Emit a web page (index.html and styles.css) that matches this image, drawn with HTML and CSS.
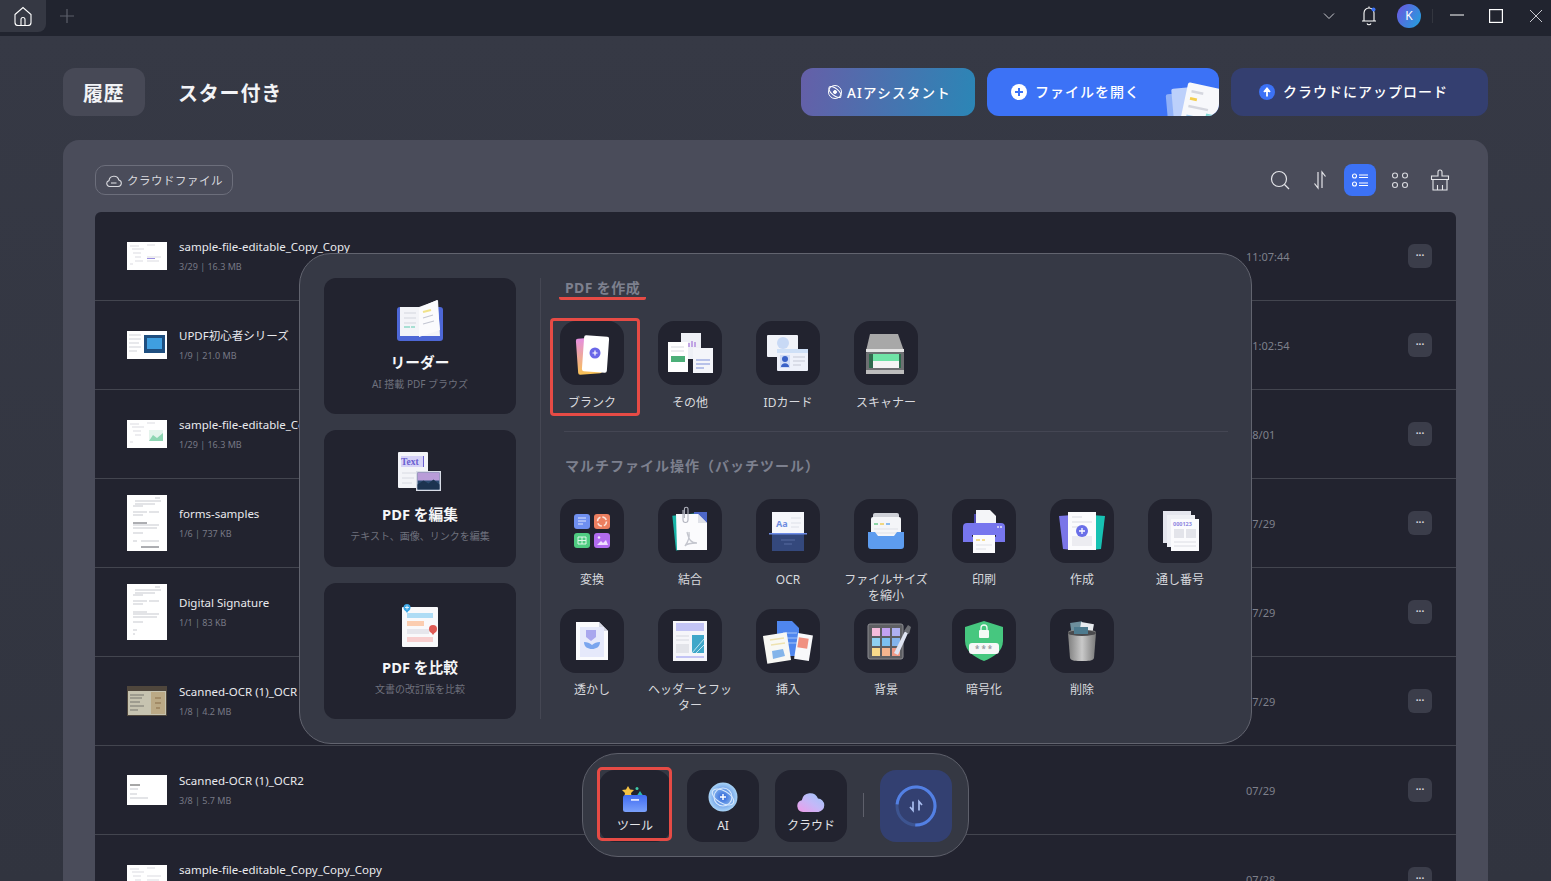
FILE: index.html
```html
<!DOCTYPE html>
<html lang="ja">
<head>
<meta charset="utf-8">
<title>UPDF</title>
<link rel="stylesheet" href="styles.css">
</head>
<body>
<div class="app">
  <header class="titlebar">
    <div class="home-tab">
      <svg width="20" height="20" viewBox="0 0 20 20" fill="none" stroke="#fff" stroke-width="1.1"><path d="M2 8.5 10 1.5l8 7v8a3 3 0 0 1-3 3H5a3 3 0 0 1-3-3z"/><path d="M8 19.500v-6a2 2 0 0 1 4 0v6"/></svg>
    </div>
    <svg class="add-tab" width="14" height="14" viewBox="0 0 14 14" stroke="#5c5f6b" stroke-width="1.2"><path d="M7 0v14M0 7h14"/></svg>
    <div class="win-controls">
      <svg class="wc-chevron" width="12" height="8" viewBox="0 0 12 8" fill="none" stroke="#c9cad0" stroke-width="1"><path d="M1 1.500 6 6.500l5-5"/></svg>
      <svg class="wc-bell" width="16" height="20" viewBox="0 0 16 20" fill="none" stroke="#fff" stroke-width="1.1"><path d="M3 14.500V7a5 5 0 0 1 10 0v7.500M1 15h14M6 17.500a2.200 2.200 0 0 0 4 0M8 .5v1.500"/><circle cx="12.500" cy="3.500" r="2" fill="#3c72f6" stroke="none"/></svg>
      <span class="avatar">K</span>
      <span class="wc-sep"></span>
      <svg class="wc-min" width="14" height="2" viewBox="0 0 14 2" stroke="#fff" stroke-width="1"><path d="M0 1h14"/></svg>
      <svg class="wc-max" width="14" height="14" viewBox="0 0 14 14" fill="none" stroke="#fff" stroke-width="1.2"><rect x=".6" y=".6" width="12.800" height="12.800"/></svg>
      <svg class="wc-close" width="14" height="14" viewBox="0 0 14 14" stroke="#c9cad0" stroke-width="1"><path d="M1 1l12 12M13 1 1 13"/></svg>
    </div>
  </header>

  <main class="main">
    <div class="top-row">
      <div class="tab tab-active">履歴</div>
      <div class="tab tab-star">スター付き</div>
      <div class="actions">
        <button class="action action-ai">
          <svg width="16" height="16" viewBox="0 0 16 16" fill="none" stroke="#fff" stroke-width="1"><circle cx="8" cy="8" r="6.500"/><ellipse cx="8" cy="8" rx="7.500" ry="3.500" transform="rotate(40 8 8)"/><circle cx="8" cy="8" r="1.500" fill="#fff"/></svg>
          <span>AIアシスタント</span>
        </button>
        <button class="action action-open">
          <svg width="16" height="16" viewBox="0 0 16 16"><circle cx="8" cy="8" r="8" fill="#fff"/><path d="M8 4v8M4 8h8" stroke="#3c72f6" stroke-width="2"/></svg>
          <span>ファイルを開く</span>
          <svg class="open-art" width="56" height="48" viewBox="0 0 56 48"><g transform="translate(0 11)"><rect x="4" y="14" width="30" height="40" rx="2" fill="#8fb0f8" transform="rotate(-5 20 30)"/><rect x="10" y="8" width="34" height="44" rx="2" fill="#bcd0fb" transform="rotate(-5 30 30)"/><g transform="rotate(12 36 30)"><rect x="20" y="6" width="44" height="46" rx="2" fill="#f7f8fb"/><rect x="25" y="13" width="12" height="2.500" fill="#d5d7df"/><rect x="25" y="20" width="7" height="3" fill="#f4cf4f"/><rect x="25" y="28" width="20" height="2.500" fill="#d5d7df"/><rect x="44" y="33" width="8" height="3" fill="#7fd8d4"/><rect x="25" y="38" width="8" height="3" fill="#9fcdf0"/></g></g></svg>
        </button>
        <button class="action action-cloud">
          <svg width="16" height="16" viewBox="0 0 16 16"><circle cx="8" cy="8" r="8" fill="#3c72f6"/><path d="M8 12.500V6.500M5 8l3-3.500L11 8" stroke="#fff" stroke-width="1.800" fill="#fff"/></svg>
          <span>クラウドにアップロード</span>
        </button>
      </div>
    </div>

    <section class="panel">
      <div class="toolbar">
        <div class="cloud-pill">
          <svg width="16" height="15" viewBox="0 0 16 15" fill="none" stroke="#d8d9de" stroke-width="1.100"><path d="M3.600 13.500a3 3 0 0 1-.6-5.900 5 5 0 0 1 9.800-.6 3.300 3.300 0 0 1-.6 6.500z"/><path d="M5 10h5.500"/></svg>
          <span>クラウドファイル</span>
        </div>
        <div class="tools">
          <svg class="tool-icon" width="20" height="20" viewBox="0 0 20 20" fill="none" stroke="#e4e5e9" stroke-width="1.200"><circle cx="9" cy="9" r="7.500"/><path d="M14.500 14.500 19 19"/></svg>
          <svg class="tool-icon" width="20" height="20" viewBox="0 0 20 20" fill="none" stroke="#e4e5e9" stroke-width="1.200"><path d="M8 2v16L4.500 13.500M12 18V2l3.500 4.500"/></svg>
          <span class="tool-active">
            <svg width="16" height="14" viewBox="0 0 16 14" fill="none" stroke="#fff" stroke-width="1.100"><circle cx="2.500" cy="3" r="2"/><circle cx="2.500" cy="11" r="2"/><path d="M7 2h9M7 4.500h9M7 10h9M7 12.500h9"/></svg>
          </span>
          <svg class="tool-icon" width="20" height="20" viewBox="0 0 20 20" fill="none" stroke="#d8d9de" stroke-width="1.100"><circle cx="5" cy="5.500" r="2.500"/><circle cx="15" cy="5.500" r="2.500"/><circle cx="5" cy="15" r="2.500"/><circle cx="15" cy="15" r="2.500"/></svg>
          <svg class="tool-icon" width="20" height="22" viewBox="0 0 20 22" fill="none" stroke="#e4e5e9" stroke-width="1.100"><path d="M8 7V3a2 2 0 0 1 4 0v4h6.500v3.500h-17V7zM3 10.500V21h14V10.500M7.500 21v-5M12.500 21v-5"/></svg>
        </div>
      </div>

      <div class="list">
        <div class="row">
          <svg class="thumb" width="40" height="28" viewBox="0 0 40 28"><rect width="40" height="28" fill="#fff"/><path d="M3 4h9M20 3h8M5 7h12M6 11h8M8 15h6M8 19h8M20 15h14M20 19h12M3 22h3" stroke="#a3a5b0" stroke-width=".4"/><rect x="20" y="16" width="8" height="1" fill="#9a8fe0"/></svg>
          <div class="info"><div class="name">sample-file-editable_Copy_Copy</div><div class="meta">3/29 | 16.3 MB</div></div>
          <div class="time">11:07:44</div><span class="more">···</span>
        </div>
        <div class="row">
          <svg class="thumb" width="40" height="28" viewBox="0 0 40 28"><rect width="40" height="28" fill="#fff"/><path d="M2 4h12M2 8h12M2 12h10M2 16h12M2 20h8" stroke="#a3a5b0" stroke-width=".5"/><rect x="17" y="4" width="21" height="18" fill="#1f4f80"/><rect x="20" y="7" width="15" height="11" fill="#3f9fe0"/></svg>
          <div class="info"><div class="name">UPDF初心者シリーズ</div><div class="meta">1/9 | 21.0 MB</div></div>
          <div class="time">11:02:54</div><span class="more">···</span>
        </div>
        <div class="row">
          <svg class="thumb" width="40" height="28" viewBox="0 0 40 28"><rect width="40" height="28" fill="#fff"/><path d="M3 4h9M20 3h8M5 7h12M6 11h8M8 15h6M3 22h3" stroke="#a3a5b0" stroke-width=".4"/><rect x="22" y="10" width="14" height="11" fill="#e4f4ec"/><path d="M22 21l4-6 4 3 6-5v8z" fill="#8ed6b3"/></svg>
          <div class="info"><div class="name">sample-file-editable_Copy</div><div class="meta">1/29 | 16.3 MB</div></div>
          <div class="time">08/01</div><span class="more">···</span>
        </div>
        <div class="row">
          <svg class="thumb" width="40" height="56" viewBox="0 0 40 56"><rect width="40" height="56" fill="#fff"/><path d="M28 3h5M8 6h26M8 9h20M6 11h10M6 17h14M22 17h10M6 20h10M6 30h26M6 33h24M6 38h10M6 46h4M14 46h18" stroke="#8f919c" stroke-width=".5"/><path d="M6 28h14M14 52h18" stroke="#30323c" stroke-width=".8"/></svg>
          <div class="info"><div class="name">forms-samples</div><div class="meta">1/6 | 737 KB</div></div>
          <div class="time">07/29</div><span class="more">···</span>
        </div>
        <div class="row">
          <svg class="thumb" width="40" height="56" viewBox="0 0 40 56"><rect width="40" height="56" fill="#fff"/><path d="M28 3h5M8 6h26M8 9h20M6 11h10M6 17h14M22 17h10M6 20h10M6 28h14M6 30h26M6 33h24M6 38h10M6 46h4M6 50h2" stroke="#8f919c" stroke-width=".5"/></svg>
          <div class="info"><div class="name">Digital Signature</div><div class="meta">1/1 | 83 KB</div></div>
          <div class="time">07/29</div><span class="more">···</span>
        </div>
        <div class="row">
          <svg class="thumb" width="40" height="30" viewBox="0 0 40 30"><rect width="40" height="30" fill="#4f463c"/><rect x="1" y="5" width="38" height="24" fill="#c6c3b0"/><rect x="24" y="6" width="14" height="22" fill="#bba985"/><path d="M3 9h14M3 12h12M3 16h10M3 20h14M3 24h8" stroke="#555" stroke-width=".7"/><path d="M28 12h6M28 17h6M29 22h4" stroke="#8a6f4a" stroke-width="1.200"/></svg>
          <div class="info"><div class="name">Scanned-OCR (1)_OCR</div><div class="meta">1/8 | 4.2 MB</div></div>
          <div class="time">07/29</div><span class="more">···</span>
        </div>
        <div class="row">
          <svg class="thumb" width="40" height="30" viewBox="0 0 40 30"><rect width="40" height="30" fill="#fff"/><path d="M3 10h10" stroke="#222" stroke-width=".8"/><path d="M3 14h8M3 19h7M3 23h18" stroke="#8f919c" stroke-width=".5"/></svg>
          <div class="info"><div class="name">Scanned-OCR (1)_OCR2</div><div class="meta">3/8 | 5.7 MB</div></div>
          <div class="time">07/29</div><span class="more">···</span>
        </div>
        <div class="row">
          <svg class="thumb" width="40" height="28" viewBox="0 0 40 28"><rect width="40" height="28" fill="#fff"/><path d="M3 4h9M20 3h8M5 7h12M6 11h8M8 15h6M20 11h14M20 15h12" stroke="#a3a5b0" stroke-width=".4"/></svg>
          <div class="info"><div class="name">sample-file-editable_Copy_Copy_Copy</div><div class="meta">3/29 | 16.3 MB</div></div>
          <div class="time">07/28</div><span class="more">···</span>
        </div>
      </div>
    </section>
  </main>

  <div class="popup">
    <div class="cards">
      <div class="card">
        <svg width="48" height="44" viewBox="0 0 48 44"><rect x="1" y="8" width="46" height="34" rx="3" fill="#4d67d6"/><path d="M4 8h19L42 1l2 36H4z" fill="#f3f4f8"/><path d="M23 9 41 1l3 30-21 7z" fill="#fbfbfd"/><path d="M8 14h12M8 19h12M8 24h12" stroke="#d3d5de" stroke-width="1.200"/><path d="M8 28h6M15 28h4" stroke="#8fd8c6" stroke-width="1.500"/><path d="M27 13l8-2" stroke="#f0e28a" stroke-width="2"/><path d="M27 19l10-3M27 25l11-3" stroke="#c3c6d2" stroke-width="1.200"/></svg>
        <div class="card-title">リーダー</div>
        <div class="card-sub">AI 搭載 PDF ブラウズ</div>
      </div>
      <div class="card">
        <svg width="46" height="44" viewBox="0 0 46 44"><rect x="1" y="1" width="30" height="36" rx="1" fill="#f3f4f8"/><rect x="4" y="5" width="22" height="11" fill="#d6d2f7"/><text x="4" y="14" class="svg-text" font-size="9.500" fill="#6a5fd0">Text</text><path d="M26.500 5v11" stroke="#6a5fd0"/><path d="M5 22h14M5 27h12M5 32h10" stroke="#d8dae2"/><rect x="19" y="20" width="25" height="20" fill="#d8dce6"/><rect x="20.500" y="21.500" width="22" height="17" fill="#2b4a70"/><path d="M20.500 21.500h22v8h-22z" fill="#b99cd8"/><path d="M20.500 38.500v-5l6-4 5 3 5-4 6 5v5z" fill="#1c3350"/></svg>
        <div class="card-title">PDF を編集</div>
        <div class="card-sub">テキスト、画像、リンクを編集</div>
      </div>
      <div class="card">
        <svg width="40" height="44" viewBox="0 0 40 44"><rect x="2" y="3" width="36" height="40" rx="1" fill="#f9f9fb"/><rect x="7" y="9" width="26" height="5" fill="#aedcf5"/><rect x="7" y="17" width="17" height="5" fill="#fbcdb0"/><rect x="7" y="25" width="22" height="5" fill="#e6e6ec"/><rect x="7" y="33" width="26" height="5" fill="#f8cfcf"/><circle cx="7" cy="3.500" r="3.500" fill="#3ba6e6"/><path d="M4.500 5.500 7 9l2.500-3.500" fill="#3ba6e6"/><path d="M5 3.500h4M7 1.500v4" stroke="#fff" stroke-width=".8"/><circle cx="33" cy="25" r="4" fill="#df5a55"/><path d="M30 27l3 4 3-4" fill="#df5a55"/></svg>
        <div class="card-title">PDF を比較</div>
        <div class="card-sub">文書の改訂版を比較</div>
      </div>
    </div>

    <div class="tools-area">
      <h3 class="heading heading-first">PDF を作成</h3>
      <div class="grid grid-create">
        <div class="item marked">
          <div class="tile"><svg width="64" height="64" viewBox="0 0 64 64"><defs><linearGradient id="gb" x1="0" y1="0" x2="0" y2="1"><stop offset="0" stop-color="#e58fe0"/><stop offset="1" stop-color="#f9c254"/></linearGradient></defs><rect x="17" y="17" width="24" height="36" rx="2" fill="url(#gb)" transform="rotate(-4 29 35)"/><rect x="23" y="15" width="25" height="36" rx="2" fill="#fff" transform="rotate(4 35 33)"/><circle cx="35" cy="32" r="5.500" fill="#6a67e8"/><path d="M35 29.500v5M32.500 32h5" stroke="#fff" stroke-width="1.200"/></svg></div>
          <div class="label">ブランク</div>
        </div>
        <div class="item">
          <div class="tile"><svg width="64" height="64" viewBox="0 0 64 64"><rect x="23" y="12" width="20" height="26" fill="#eef0f6"/><path d="M31 22v4M34 20v6M37 21v5" stroke="#b28ce0" stroke-width="1.500"/><rect x="10" y="21" width="20" height="30" fill="#fff"/><path d="M13 26h13M13 30h13" stroke="#d8d9e0"/><rect x="13" y="35" width="14" height="6" fill="#4caf78"/><rect x="35" y="27" width="20" height="25" fill="#f4f5fa"/><path d="M38 39h14M38 43h14M38 47h8" stroke="#7d8fd8"/></svg></div>
          <div class="label">その他</div>
        </div>
        <div class="item">
          <div class="tile"><svg width="64" height="64" viewBox="0 0 64 64"><rect x="11" y="14" width="31" height="22" rx="1" fill="#f1f3f9"/><circle cx="27" cy="22" r="6" fill="#c8d9f5"/><rect x="21" y="28" width="31" height="22" rx="1" fill="#eef1fa"/><rect x="21" y="28" width="31" height="4" fill="#cfe0f7"/><rect x="24" y="34" width="10" height="13" fill="#d0dcf6"/><circle cx="29" cy="38" r="3" fill="#3a62c8"/><path d="M25 46c0-5 8-5 8 0z" fill="#3a62c8"/><path d="M37 36h12M37 40h12M37 44h8" stroke="#c6c9d6"/></svg></div>
          <div class="label">IDカード</div>
        </div>
        <div class="item">
          <div class="tile"><svg width="64" height="64" viewBox="0 0 64 64"><path d="M16 13h28l6 17H12z" fill="#a8a8a8"/><rect x="12" y="28" width="38" height="3" fill="#e4e4e4"/><rect x="12" y="31" width="38" height="22" rx="1" fill="#6d6f72"/><rect x="15" y="33" width="32" height="14" fill="#2f6a4d"/><rect x="19" y="33" width="26" height="7" fill="#6fe3a6"/><rect x="19" y="40" width="26" height="7" fill="#f5f5f5"/><rect x="12" y="49" width="38" height="4" fill="#bdbdbd"/></svg></div>
          <div class="label">スキャナー</div>
        </div>
      </div>

      <div class="divider"></div>

      <h3 class="heading heading-second">マルチファイル操作（バッチツール）</h3>
      <div class="grid grid-batch">
        <div class="item">
          <div class="tile"><svg width="64" height="64" viewBox="0 0 64 64"><rect x="14" y="15" width="16" height="15" rx="3" fill="#6f8ff0"/><path d="M18 19h8M18 22h8M18 25h5" stroke="#dfe6fb" stroke-width="1.200"/><rect x="34" y="15" width="16" height="15" rx="3" fill="#ec7f60"/><circle cx="42" cy="22.500" r="4.500" fill="none" stroke="#fbe3da" stroke-width="1.500" stroke-dasharray="5 2"/><rect x="14" y="34" width="16" height="15" rx="3" fill="#4fcb81"/><path d="M18 38h8v7h-8zM22 38v7M18 41.500h8" fill="none" stroke="#dcf6e7"/><rect x="34" y="34" width="16" height="15" rx="3" fill="#b26cf0"/><path d="M37 46l4-4 2 2 3-3 2 5z" fill="#efe0fc"/><circle cx="39" cy="38.500" r="1.300" fill="#efe0fc"/></svg></div>
          <div class="label">変換</div>
        </div>
        <div class="item">
          <div class="tile"><svg width="64" height="64" viewBox="0 0 64 64"><rect x="16" y="15" width="31" height="35" fill="#17b3a6" transform="rotate(-6 32 32)"/><rect x="36" y="13" width="13" height="18" fill="#4d67c8"/><path d="M18 15h22l9 9v27H19z" fill="#fbfbfd"/><path d="M40 15l9 9h-9z" fill="#dfe1e8"/><path d="M29 33c2 8 4 11 10 11-5 0-10 0-12 3 3-4 5-8 4-14" fill="none" stroke="#c4c6ce" stroke-width="1.300"/><path d="M25 11v10a2.500 2.500 0 0 0 5 0V10a1.800 1.800 0 0 0-3.600 0v9" fill="none" stroke="#b3b5bf" stroke-width="1.100"/></svg></div>
          <div class="label">結合</div>
        </div>
        <div class="item">
          <div class="tile"><svg width="64" height="64" viewBox="0 0 64 64"><rect x="16" y="13" width="32" height="21" fill="#f6f7fb"/><text x="20" y="28" class="svg-text-sans" font-size="9" fill="#6e8ee0">Aa</text><path d="M35 19h10M35 24h10M35 28h8" stroke="#dde0e8"/><rect x="16" y="35" width="32" height="17" fill="#34487c"/><path d="M25 41h14M28 45h8" stroke="#566aa0"/><rect x="13" y="34" width="38" height="1.500" fill="#6d8ce8"/></svg></div>
          <div class="label">OCR</div>
        </div>
        <div class="item">
          <div class="tile"><svg width="64" height="64" viewBox="0 0 64 64"><rect x="19" y="14" width="26" height="14" rx="2" fill="#cfd1d8"/><rect x="17" y="18" width="30" height="26" rx="2" fill="#f4f5f8"/><path d="M20 25h4" stroke="#69c98c" stroke-width="1.500"/><path d="M26 25h4" stroke="#f0cc58" stroke-width="1.500"/><path d="M32 25h4" stroke="#69a8ec" stroke-width="1.500"/><path d="M20 30h24M20 34h24" stroke="#dfe1e7"/><path d="M14 33h7l3 4h16l3-4h7v14a3 3 0 0 1-3 3H17a3 3 0 0 1-3-3z" fill="#5d9cef"/></svg></div>
          <div class="label">ファイルサイズを縮小</div>
        </div>
        <div class="item">
          <div class="tile"><svg width="64" height="64" viewBox="0 0 64 64"><rect x="22" y="15" width="20" height="10" fill="#4b48b0"/><path d="M24 11h14l6 6v13H24z" fill="#f4f5f8"/><path d="M11 28a4 4 0 0 1 4-4h34a4 4 0 0 1 4 4v15H11z" fill="#7776ee"/><circle cx="46" cy="28" r="1" fill="#e7e7fb"/><circle cx="49" cy="28" r="1" fill="#e7e7fb"/><rect x="20" y="36" width="24" height="1.800" fill="#20202e"/><rect x="21" y="36" width="22" height="18" fill="#fbfbfd"/><path d="M24 41h4" stroke="#f0cc58" stroke-width="1.300"/><path d="M30 41h3" stroke="#f0cc58" stroke-width="1.300"/><path d="M24 46h16M24 50h10" stroke="#dfe1e7"/></svg></div>
          <div class="label">印刷</div>
        </div>
        <div class="item">
          <div class="tile"><svg width="64" height="64" viewBox="0 0 64 64"><path d="M9 17l14-1v35l-10-1z" fill="#7a75e8"/><path d="M55 17l-14-1v35l10-1z" fill="#17c2b3"/><rect x="18" y="13" width="28" height="38" fill="#fbfbfd"/><path d="M22 18h10M22 23h20M22 28h10" stroke="#d9dbe3"/><rect x="22" y="37" width="20" height="10" fill="#ececf1"/><circle cx="32" cy="32" r="6" fill="#6a6fe8"/><path d="M32 29v6M29 32h6" stroke="#fff" stroke-width="1.300"/></svg></div>
          <div class="label">作成</div>
        </div>
        <div class="item">
          <div class="tile"><svg width="64" height="64" viewBox="0 0 64 64"><rect x="15" y="12" width="28" height="32" fill="#e5e6ee"/><rect x="19" y="16" width="28" height="32" fill="#eff0f5"/><rect x="23" y="20" width="28" height="32" fill="#fbfbfd"/><text x="25" y="27" class="svg-text-sans" font-size="5.500" fill="#8d86e0">000123</text><rect x="26" y="30" width="10" height="9" fill="#e3e4ea"/><rect x="38" y="30" width="10" height="9" fill="#e3e4ea"/><path d="M26 43h22M26 47h22" stroke="#dcdde4"/></svg></div>
          <div class="label">通し番号</div>
        </div>
        <div class="item">
          <div class="tile"><svg width="64" height="64" viewBox="0 0 64 64"><path d="M16 13h23l9 9v29H16z" fill="#fbfbfd"/><path d="M39 13l9 9h-9z" fill="#d6d8e4"/><rect x="20" y="18" width="24" height="30" fill="#e6e9fb"/><path d="M26 21h10v7l-5 4-5-4z" fill="#a9a7ee"/><path d="M24 33c0 5 4 7 8 7s8-2 8-7c-3 0-6 1-8 3-2-2-5-3-8-3z" fill="#7aa5ee"/></svg></div>
          <div class="label">透かし</div>
        </div>
        <div class="item">
          <div class="tile"><svg width="64" height="64" viewBox="0 0 64 64"><rect x="15" y="12" width="34" height="40" fill="#f6f6fa"/><rect x="18" y="14" width="28" height="8" fill="#c3c4f5"/><path d="M18 27h13M18 31h13" stroke="#d6d8e0"/><rect x="18" y="35" width="13" height="9" fill="#e3e4ea"/><rect x="34" y="26" width="12" height="18" fill="#3fa7c9"/><path d="M34 44l12-14M38 44l8-8" stroke="#bfe4f0" stroke-width="1"/><rect x="18" y="47" width="28" height="2" fill="#c3c4f5"/></svg></div>
          <div class="label">ヘッダーとフッター</div>
        </div>
        <div class="item">
          <div class="tile"><svg width="64" height="64" viewBox="0 0 64 64"><path d="M21 12h15l7 7v28H21z" fill="#4f86ee"/><path d="M27 24h14M27 29h14M27 34h14" stroke="#a9c6f8"/><rect x="40" y="25" width="15" height="26" fill="#f8f8fa" transform="rotate(9 47 38)"/><rect x="42" y="29" width="10" height="10" fill="#f09080" transform="rotate(9 47 34)"/><rect x="9" y="25" width="24" height="28" fill="#f8f8f4" transform="rotate(-9 21 39)"/><path d="M14 31l14-2M15 36l14-2" stroke="#eee2b0" stroke-width="1.500"/><path d="M17 50l-1-8 11-2 2 7z" fill="#84b5ea"/></svg></div>
          <div class="label">挿入</div>
        </div>
        <div class="item">
          <div class="tile"><svg width="64" height="64" viewBox="0 0 64 64"><rect x="14" y="15" width="35" height="35" rx="2" fill="#5e5f63" stroke="#8a8b90"/><g><rect x="18" y="19" width="8" height="8" fill="#f5bcdc"/><rect x="28" y="19" width="8" height="8" fill="#c2a2f2"/><rect x="38" y="19" width="8" height="8" fill="#aeb0f2"/><rect x="18" y="29" width="8" height="8" fill="#8ed0f2"/><rect x="28" y="29" width="8" height="8" fill="#7cc0f0"/><rect x="38" y="29" width="8" height="8" fill="#84b4ec"/><rect x="18" y="39" width="8" height="8" fill="#f8d98a"/><rect x="28" y="39" width="8" height="8" fill="#f5b58e"/><rect x="38" y="39" width="8" height="8" fill="#f09a86"/></g><path d="M40 44l11-22 3 2-10 22z" fill="#dfe4f2"/><path d="M50 22l4-6 3 2-2 7z" fill="#6c6e74"/></svg></div>
          <div class="label">背景</div>
        </div>
        <div class="item">
          <div class="tile"><svg width="64" height="64" viewBox="0 0 64 64"><path d="M32 12l19 6v14c0 10-9 16-19 20-10-4-19-10-19-20V18z" fill="#46c77f"/><rect x="27" y="21" width="10" height="8" rx="1" fill="#f2fbf6"/><path d="M29 21v-2a3 3 0 0 1 6 0v2" fill="none" stroke="#f2fbf6" stroke-width="1.300"/><rect x="17" y="34" width="30" height="11" rx="3" fill="#f7f8f8"/><text x="23" y="43" class="svg-text-sans" font-size="8" fill="#9a9ca3">* * *</text></svg></div>
          <div class="label">暗号化</div>
        </div>
        <div class="item">
          <div class="tile"><svg width="64" height="64" viewBox="0 0 64 64"><defs><linearGradient id="gt" x1="0" y1="0" x2="1" y2="0"><stop offset="0" stop-color="#7f7f7f"/><stop offset=".5" stop-color="#c9c9c9"/><stop offset="1" stop-color="#7a7a7a"/></linearGradient></defs><rect x="21" y="13" width="12" height="14" fill="#6d8e9c" transform="rotate(-8 27 20)"/><rect x="30" y="14" width="13" height="13" fill="#e8ebef" transform="rotate(10 36 20)"/><path d="M18 24c0-3 4-3 14-3s14 0 14 3l-2 25c-1 3-6 3-12 3s-11 0-12-3z" fill="url(#gt)"/><ellipse cx="32" cy="24" rx="14" ry="3" fill="#4b4b4e"/><rect x="24" y="18" width="14" height="7" fill="#4d7a8e"/></svg></div>
          <div class="label">削除</div>
        </div>
      </div>
    </div>
  </div>

  <div class="dock">
    <div class="dock-item dock-tools">
      <svg width="28" height="26" viewBox="0 0 28 26"><defs><linearGradient id="gd" x1="0" y1="0" x2="0" y2="1"><stop offset="0" stop-color="#3f6bf2"/><stop offset="1" stop-color="#7aa0fa"/></linearGradient></defs><path d="M7 0l2 3.500 4 .6-3 2.800.7 4L7 9l-3.700 1.900.7-4-3-2.800 4-.6z" fill="#f5c244"/><path d="M19 5l6 9H13z" fill="#2ab7b0"/><circle cx="16" cy="2.500" r="1.500" fill="#3fc9a8"/><rect x="2" y="9" width="24" height="17" rx="2.500" fill="url(#gd)"/><rect x="10" y="13" width="8" height="1.800" fill="#dbe4ff"/></svg>
      <span>ツール</span>
    </div>
    <div class="dock-item">
      <svg width="30" height="30" viewBox="0 0 30 30" fill="none"><defs><radialGradient id="ga"><stop offset="0" stop-color="#2c63d8"/><stop offset="1" stop-color="#a9d4f7"/></radialGradient></defs><circle cx="15" cy="15" r="14.500" fill="url(#ga)"/><circle cx="15" cy="15" r="9" stroke="#d5e7fc" stroke-width="1.100"/><ellipse cx="15" cy="15" rx="12" ry="6" stroke="#d5e7fc" stroke-width="1" transform="rotate(30 15 15)"/><path d="M15 12v6M12 15h6" stroke="#fff" stroke-width="1.500"/></svg>
      <span>AI</span>
    </div>
    <div class="dock-item">
      <svg width="28" height="20" viewBox="0 0 28 20"><defs><linearGradient id="gc" x1="0" y1="1" x2="1" y2="0"><stop offset="0" stop-color="#f09be8"/><stop offset=".5" stop-color="#c4b8f8"/><stop offset="1" stop-color="#9cc6fa"/></linearGradient></defs><path d="M6 20a6 6 0 0 1-1.200-11.800A8.500 8.500 0 0 1 21 6.500 6.800 6.800 0 0 1 21.500 20z" fill="url(#gc)"/></svg>
      <span>クラウド</span>
    </div>
    <span class="dock-sep"></span>
    <div class="dock-sync">
      <svg width="42" height="42" viewBox="0 0 42 42" fill="none"><circle cx="21" cy="21" r="19" stroke="#3d5490" stroke-width="3"/><circle cx="21" cy="21" r="19" stroke="#5380e4" stroke-width="3" stroke-dasharray="88 32" transform="rotate(185 21 21)"/><path d="M18 16.500v9l-3-3.500M24 25.500v-9l3 3.500" stroke="#a9bdef" stroke-width="1.700"/></svg>
    </div>
  </div>
</div>
</body>
</html>
```

FILE: styles.css
```css
*, *::before, *::after { box-sizing: border-box; }
html, body { margin: 0; padding: 0; height: 100%; }
body {
  background: #353843;
  font-family: "Noto Sans", "Noto Sans CJK JP", sans-serif;
  color: #fff;
  overflow: hidden;
}
.app { position: relative; width: 1551px; height: 881px; overflow: hidden; }

.titlebar { height: 36px; background: #21242f; display: flex; align-items: flex-start; }
.home-tab {
  width: 46px; height: 32px;
  background: #353843; border-radius: 0 0 8px 0;
  display: flex; align-items: center; justify-content: center;
}
.add-tab { margin: 9px 0 0 14px; }
.win-controls { margin-left: auto; display: flex; align-items: center; height: 32px; }
.wc-chevron { margin-right: 26px; }
.wc-bell { margin-right: 20px; }
.avatar {
  width: 24px; height: 24px; border-radius: 50%;
  background: linear-gradient(120deg, #6d55e0, #1fa3dc);
  font-size: 12px; line-height: 24px; text-align: center; color: #fff;
}
.wc-sep { width: 1px; height: 14px; background: #33363f; margin: 0 17px 0 11px; }
.wc-min { margin-right: 25px; margin-top: -2px; }
.wc-max { margin-right: 26px; }
.wc-close { margin-right: 8px; }

.main { padding: 32px 63px 0; background: linear-gradient(#363945, #31343f); height: 845px; }
.top-row { display: flex; align-items: center; height: 48px; margin-bottom: 24px; }
.tab {
  height: 48px; padding: 0 20px; border-radius: 12px;
  font-size: 20px; font-weight: 700; line-height: 52px; color: #f2f3f6;
  margin-right: 13px;
}
.tab-star { letter-spacing: .8px; }
.tab-active { background: #474956; width: 82px; letter-spacing: .6px; }
.actions { margin-left: auto; display: flex; gap: 12px; }
.action {
  height: 48px; border: 0; border-radius: 12px; color: #fff;
  display: flex; align-items: center; overflow: hidden;
  font-family: inherit; font-size: 14px; font-weight: 500; letter-spacing: 1px;
  position: relative; padding: 0;
}
.action span { margin-top: -3px; }
.action-ai { width: 174px; background: linear-gradient(100deg, #655fa8, #2b86b6); padding-left: 26px; gap: 4px; }
.action-ai span { letter-spacing: 1.250px; font-size: 13.500px; margin-top: -1px; }
.action-open { width: 232px; background: #3c72f6; padding-left: 24px; gap: 8px; }
.action-cloud { width: 257px; background: #343f70; padding-left: 28px; gap: 8px; }
.open-art { position: absolute; right: 0; top: 0; }

.panel { background: #4a4c5a; border-radius: 16px 16px 0 0; padding: 24px 32px 0; height: 741px; }
.toolbar { display: flex; align-items: center; justify-content: space-between; height: 32px; margin-bottom: 16px; }
.cloud-pill {
  width: 138px; height: 30px; border: 1px solid #6c6e7b; border-radius: 10px;
  display: flex; align-items: center; gap: 5px; padding-left: 10px;
  font-size: 11.500px; letter-spacing: .5px; color: #d8d9de;
}
.tools { display: flex; align-items: center; padding-right: 6px; }
.tool-icon { margin: 0 10px; }
.tool-active {
  width: 32px; height: 32px; border-radius: 8px; background: #3c72f6;
  display: flex; align-items: center; justify-content: center; margin: 0 4px;
}
.tools .tool-icon:last-child { margin-right: 0; margin-left: 10px; }

.list { background: #22232f; border-radius: 6px 6px 0 0; }
.row {
  height: 89px; border-bottom: 1px solid #43454f;
  display: flex; align-items: center; padding: 0 24px 0 32px;
}
.thumb { flex: none; width: 40px; display: block; }
.info { margin-left: 12px; flex: 1; min-width: 0; }
.name { font-size: 11.500px; line-height: 16px; color: #e9eaee; }
.meta { font-size: 9px; line-height: 12px; margin-top: 6px; color: #777985; }
.time { width: 162px; font-size: 11px; color: #7e808b; }
.more {
  width: 24px; height: 24px; border-radius: 6px; background: #3b3d4a;
  color: #d8d9de; font-size: 10px; font-weight: 700; line-height: 23px; text-align: center;
}

.popup {
  position: absolute; left: 299px; top: 253px; width: 953px; height: 491px;
  background: #363945; border: 1px solid #62646f; border-radius: 32px;
  padding: 24px; display: flex;
}
.cards { width: 192px; display: flex; flex-direction: column; gap: 16px; flex: none; }
.card {
  height: 136.500px; background: #22232f; border-radius: 12px;
  display: flex; flex-direction: column; align-items: center; justify-content: flex-start;
  padding-top: 21px;
}
.card svg { height: 44px; display: block; }
.card-title { font-size: 14.700px; font-weight: 700; line-height: 20px; margin-top: 9px; color: #f5f6f8; }
.card-sub { font-size: 10px; line-height: 14px; margin-top: 5px; color: #6f717d; }
.tools-area { margin-left: 24px; border-left: 1px solid #454753; padding-left: 2px; flex: 1; }
.heading { margin: 0; font-size: 14px; font-weight: 700; line-height: 20px; color: #7d808e; }
.heading-first {
  display: inline-block; padding: 0 6px; margin-left: 16px;
  border-bottom: 3px solid #e64b45; border-radius: 0 0 2px 2px; height: 22px;
  vertical-align: top; margin-bottom: 21px; letter-spacing: .4px;
}
.heading-second { margin: 24px 0 23px 22px; letter-spacing: 1px; }
.grid { display: grid; grid-template-columns: repeat(7, 98px); }
.grid-batch { row-gap: 5px; }
.item { display: flex; flex-direction: column; align-items: center; padding: 0 4px; position: relative; }
.tile { width: 64px; height: 64px; background: #22232f; border-radius: 16px; flex: none; }
.tile svg { display: block; }
.label { font-size: 12px; line-height: 16px; margin-top: 9px; color: #d8d9de; text-align: center; }
.grid-create .label { margin-top: 10px; }
.marked::after {
  content: ""; position: absolute; left: 7px; top: -3px; width: 90px; height: 98px;
  border: 3px solid #e64b45; border-radius: 4px;
}
.divider { height: 1px; background: #444653; width: 664px; margin: 20px 0 0 21px; }
.svg-text { font-family: "Liberation Serif", serif; font-weight: 700; }
.svg-text-sans { font-family: "Noto Sans", sans-serif; font-weight: 700; }

.dock {
  position: absolute; left: 582px; top: 753px; width: 387px; height: 104px;
  background: #353843; border: 1px solid #5e606b; border-radius: 36px;
  display: flex; align-items: flex-start; padding: 16px 0 0 16px;
}
.dock-item {
  width: 72px; height: 72px; background: #22232f; border-radius: 16px;
  display: flex; flex-direction: column; align-items: center; justify-content: flex-end;
  margin-right: 16px; padding-bottom: 8px; position: relative;
  font-size: 12px; line-height: 16px; color: #e4e5e9;
}
.dock-item svg { margin-bottom: 6px; }
.dock-tools::after {
  content: ""; position: absolute; left: -2px; top: -3px; width: 75px; height: 74px;
  border: 3px solid #e64b45; border-radius: 5px;
}
.dock-sep { width: 1px; height: 24px; background: #5e606b; margin: 23px 16px 0 0; }
.dock-sync {
  width: 72px; height: 72px; background: #334071; border-radius: 16px;
  display: flex; align-items: center; justify-content: center;
}
```
